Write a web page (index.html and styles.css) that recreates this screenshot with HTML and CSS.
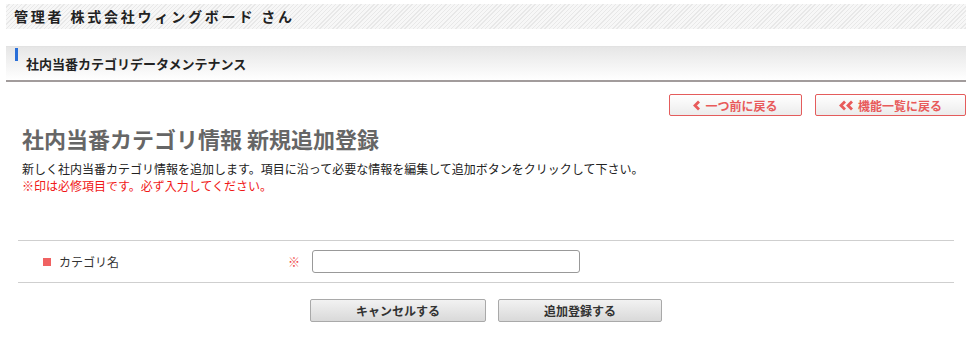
FILE: index.html
```html
<!DOCTYPE html>
<html lang="ja">
<head>
  <meta charset="UTF-8" />
  <title>社内当番カテゴリ情報 新規追加登録</title>
  <link rel="stylesheet" href="styles.css">
</head>
<body>
  <div class="wrap">
    <div class="user-bar">管理者 株式会社ウィングボード さん</div>

    <div class="section-head">
      <span class="mark"></span>
      <h2>社内当番カテゴリデータメンテナンス</h2>
    </div>

    <div class="nav-buttons">
      <a href="#" class="nav-btn back">
        <svg width="8" height="11" viewBox="0 0 8 11"><polyline points="6,1.5 2,5.5 6,9.5" fill="none" stroke="#e85a5a" stroke-width="2.8"/></svg>
        一つ前に戻る
      </a>
      <a href="#" class="nav-btn list">
        <svg width="15" height="11" viewBox="0 0 15 11"><polyline points="6,1.5 2,5.5 6,9.5" fill="none" stroke="#e85a5a" stroke-width="2.8"/><polyline points="13,1.5 9,5.5 13,9.5" fill="none" stroke="#e85a5a" stroke-width="2.8"/></svg>
        機能一覧に戻る
      </a>
    </div>

    <div class="content">
      <h1>社内当番カテゴリ情報 新規追加登録</h1>
      <p class="lead">新しく社内当番カテゴリ情報を追加します。項目に沿って必要な情報を編集して追加ボタンをクリックして下さい。</p>
      <p class="note">※印は必修項目です。必ず入力してください。</p>
    </div>

    <div class="form-table">
      <div class="row">
        <div class="label"><span class="sq"></span>カテゴリ名</div>
        <div class="req">※</div>
        <input type="text" class="field" />
      </div>
    </div>

    <div class="actions">
      <button class="btn cancel">キャンセルする</button>
      <button class="btn add">追加登録する</button>
    </div>
  </div>
</body>
</html>
```

FILE: styles.css
```css
* {
  box-sizing: border-box;
  margin: 0;
  font-family: 'Noto Sans CJK JP', 'Noto Sans', sans-serif;
}

body {
  background: #fff;
  color: #333;
}

.wrap {
  width: 960px;
  margin: 4px 0 0 6px;
}

.user-bar {
  height: 25px;
  padding-left: 8px;
  font-size: 14px;
  font-weight: bold;
  line-height: 25px;
  letter-spacing: 2.8px;
  color: #222;
  background: repeating-linear-gradient(135deg, #f7f7f7 0 2px, #e8e8e8 2px 3px);
}

.section-head {
  display: flex;
  align-items: flex-start;
  height: 36px;
  margin-top: 17px;
  border-top: 1px solid #e2e2e2;
  border-bottom: 2px solid #a29c9c;
  background: linear-gradient(#e6e6e6, #ffffff);
}

.section-head .mark {
  width: 3px;
  height: 13px;
  margin: 1px 0 0 9px;
  background: #2a6fd8;
}

.section-head h2 {
  font-size: 13px;
  font-weight: bold;
  color: #222;
  margin: 7px 0 0 8px;
}

.nav-buttons {
  display: flex;
  justify-content: flex-end;
  gap: 13px;
  margin-top: 12px;
}

.nav-btn {
  display: flex;
  align-items: center;
  justify-content: center;
  gap: 4px;
  height: 22px;
  border: 1px solid #e45c5c;
  border-radius: 2px;
  background: linear-gradient(#ffffff, #ececec);
  color: #e85a5a;
  font-size: 12px;
  font-weight: bold;
  text-decoration: none;
}

.nav-btn.back {
  width: 133px;
}

.nav-btn.list {
  width: 151px;
}

.content {
  padding-left: 16px;
}

.content h1 {
  font-size: 22px;
  font-weight: bold;
  color: #666;
  margin-top: 5px;
  line-height: 34px;
}

.lead {
  font-size: 12px;
  color: #222;
  margin-top: 5px;
  line-height: 17px;
}

.note {
  font-size: 12px;
  color: #f01818;
  line-height: 17px;
}

.form-table {
  margin: 46px 12px 0 12px;
  border-top: 1px solid #cfcfcf;
  border-bottom: 1px solid #cfcfcf;
}

.row {
  display: flex;
  align-items: center;
  height: 41px;
}

.row .label {
  display: flex;
  align-items: center;
  width: 270px;
  padding-left: 25px;
  font-size: 12px;
  color: #333;
}

.row .sq {
  width: 8px;
  height: 8px;
  margin-right: 8px;
  background: #f06262;
}

.row .req {
  width: 24px;
  font-size: 12px;
  color: #f04848;
}

.row .field {
  width: 268px;
  height: 23px;
  border: 1px solid #999;
  border-radius: 3px;
  outline: none;
}

.actions {
  display: flex;
  justify-content: center;
  gap: 12px;
  margin-top: 16px;
}

.btn {
  height: 23px;
  border: 1px solid #a9a9a9;
  border-radius: 2px;
  background: linear-gradient(#f2f2f2, #d9d9d9);
  font-size: 12px;
  font-weight: bold;
  color: #333;
  cursor: pointer;
}

.btn.cancel {
  width: 176px;
}

.btn.add {
  width: 164px;
}
```
